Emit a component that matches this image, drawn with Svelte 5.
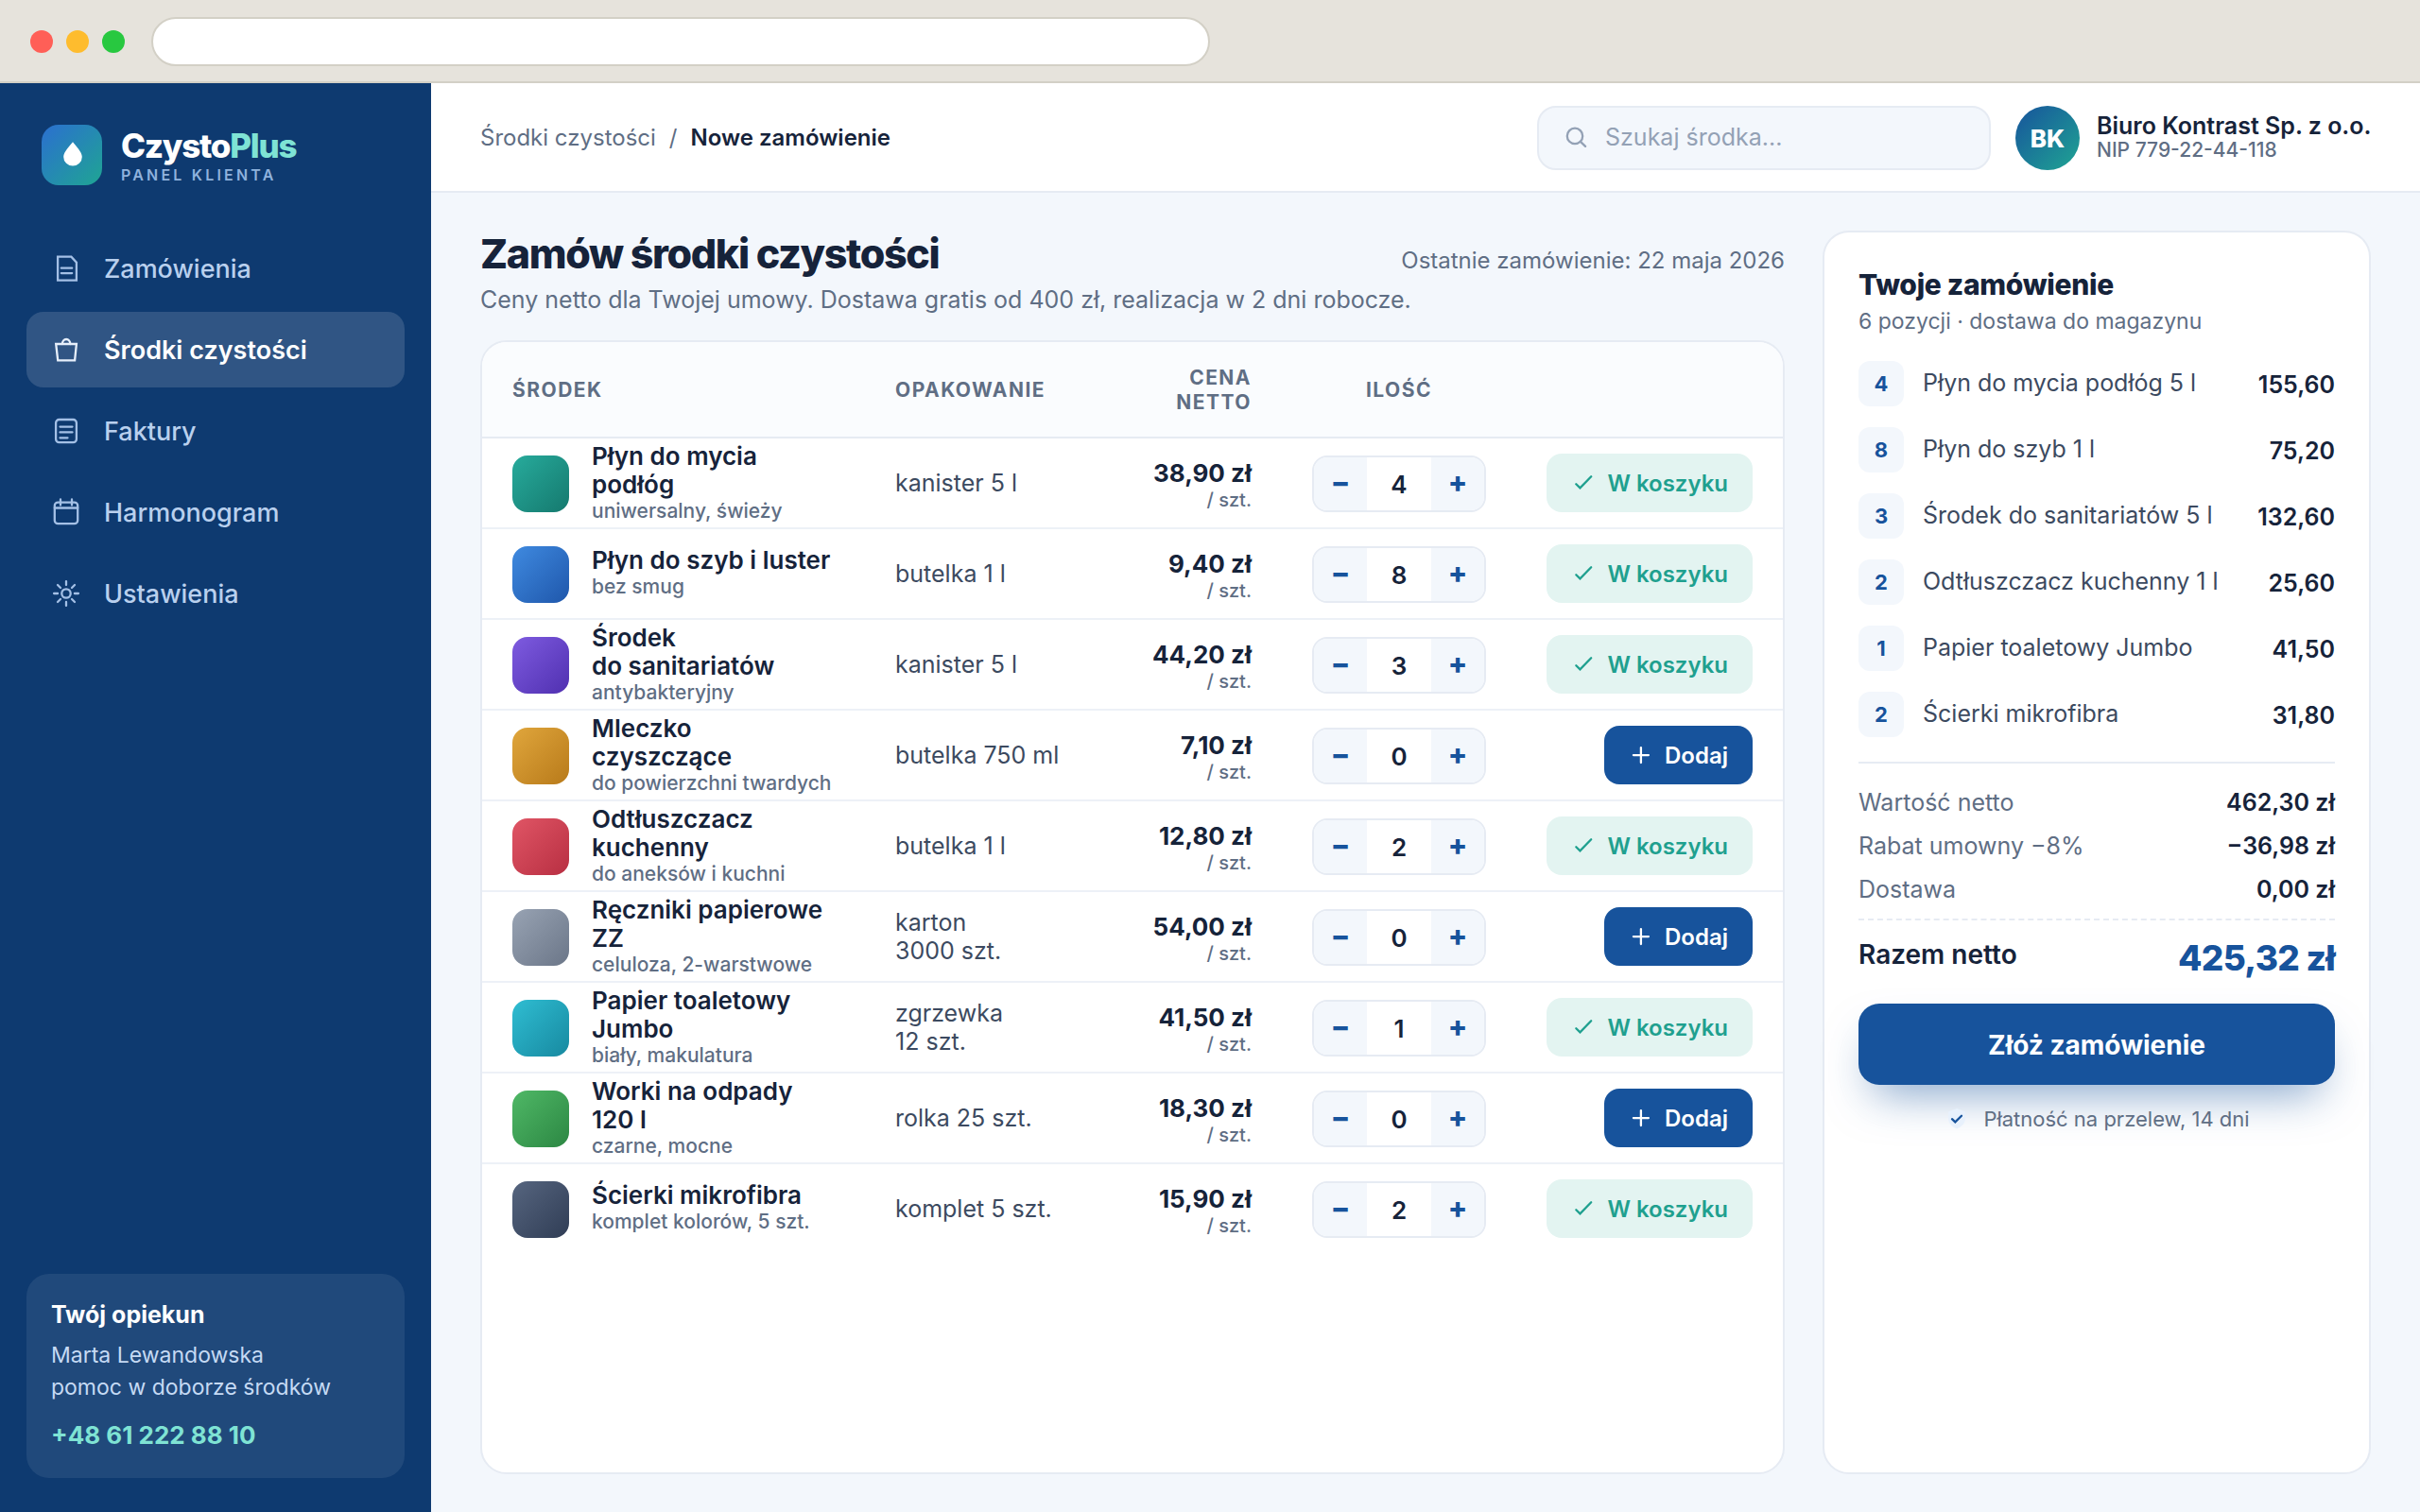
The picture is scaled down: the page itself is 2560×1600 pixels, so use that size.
<script lang="ts">
	type Product = {
		name: string;
		note: string;
		pack: string;
		price: string;
		qty: number;
		from: string;
		to: string;
	};

	const nav = [
		{ icon: 'doc', label: 'Zamówienia' },
		{ icon: 'bag', label: 'Środki czystości' },
		{ icon: 'invoice', label: 'Faktury' },
		{ icon: 'calendar', label: 'Harmonogram' },
		{ icon: 'sun', label: 'Ustawienia' }
	];

	let active = $state('bag');

	let products = $state<Product[]>([
		{ name: 'Płyn do mycia\npodłóg', note: 'uniwersalny, świeży', pack: 'kanister 5 l', price: '38,90', qty: 4, from: '#27ab9c', to: '#15796e' },
		{ name: 'Płyn do szyb i luster', note: 'bez smug', pack: 'butelka 1 l', price: '9,40', qty: 8, from: '#3f8ae0', to: '#1f57ab' },
		{ name: 'Środek\ndo sanitariatów', note: 'antybakteryjny', pack: 'kanister 5 l', price: '44,20', qty: 3, from: '#7e5be0', to: '#5030b0' },
		{ name: 'Mleczko\nczyszczące', note: 'do powierzchni twardych', pack: 'butelka 750 ml', price: '7,10', qty: 0, from: '#e0a63c', to: '#b87a1a' },
		{ name: 'Odtłuszczacz\nkuchenny', note: 'do aneksów i kuchni', pack: 'butelka 1 l', price: '12,80', qty: 2, from: '#e05565', to: '#b82f42' },
		{ name: 'Ręczniki papierowe\nZZ', note: 'celuloza, 2-warstwowe', pack: 'karton\n3000 szt.', price: '54,00', qty: 0, from: '#98a3b3', to: '#6b7688' },
		{ name: 'Papier toaletowy\nJumbo', note: 'biały, makulatura', pack: 'zgrzewka\n12 szt.', price: '41,50', qty: 1, from: '#2fbdd2', to: '#1789a0' },
		{ name: 'Worki na odpady\n120 l', note: 'czarne, mocne', pack: 'rolka 25 szt.', price: '18,30', qty: 0, from: '#4fb866', to: '#2c8743' },
		{ name: 'Ścierki mikrofibra', note: 'komplet kolorów, 5 szt.', pack: 'komplet 5 szt.', price: '15,90', qty: 2, from: '#56657f', to: '#303d55' }
	]);

	const lines = [
		{ qty: 4, name: 'Płyn do mycia podłóg 5 l', sum: '155,60' },
		{ qty: 8, name: 'Płyn do szyb 1 l', sum: '75,20' },
		{ qty: 3, name: 'Środek do sanitariatów 5 l', sum: '132,60' },
		{ qty: 2, name: 'Odtłuszczacz kuchenny 1 l', sum: '25,60' },
		{ qty: 1, name: 'Papier toaletowy Jumbo', sum: '41,50' },
		{ qty: 2, name: 'Ścierki mikrofibra', sum: '31,80' }
	];

	const totals = [
		{ label: 'Wartość netto', value: '462,30 zł' },
		{ label: 'Rabat umowny −8%', value: '−36,98 zł' },
		{ label: 'Dostawa', value: '0,00 zł' }
	];

	function change(product: Product, step: number) {
		product.qty = Math.max(0, product.qty + step);
	}
</script>

<div class="window">
	<div class="chrome">
		<span class="light red"></span>
		<span class="light yellow"></span>
		<span class="light green"></span>
		<div class="address"></div>
	</div>

	<div class="app">
		<aside class="sidebar">
			<div class="brand">
				<div class="brand-mark">
					<svg viewBox="0 0 64 64">
						<path d="M33 18.2c2.8 4 9.8 10.2 9.8 15.8a9.8 9.6 0 0 1-19.6 0c0-5.6 7-11.8 9.8-15.8z" />
					</svg>
				</div>
				<div class="brand-text">
					<div class="brand-name">Czysto<span>Plus</span></div>
					<div class="brand-sub">PANEL KLIENTA</div>
				</div>
			</div>

			<nav>
				{#each nav as item (item.icon)}
					<button class="nav-item" class:active={active === item.icon} onclick={() => (active = item.icon)}>
						<svg viewBox="0 0 36 36">
							{#if item.icon === 'doc'}
								<path d="M9.1 5.6h14.3l5.5 6v19H9.1z" />
								<path d="M12.8 17.7h11.4M12.8 23.1h11.4" />
							{:else if item.icon === 'bag'}
								<path d="M7.2 12h21.7l-1.8 17.3H9.2z" />
								<path d="M13.9 12a4.2 5 0 0 1 8.4 0" />
							{:else if item.icon === 'invoice'}
								<rect x="7.1" y="6" width="21.8" height="24.2" rx="3.5" />
								<path d="M11.5 13.6h13M11.5 19.4h13M11.5 25.3h8" />
							{:else if item.icon === 'calendar'}
								<rect x="5.8" y="7.6" width="24.4" height="22.6" rx="3.5" />
								<path d="M5.8 13.5h24.4M12 4.4v6.2M24 4.4v6.2" />
							{:else}
								<circle cx="18" cy="18" r="4.7" />
								<path d="M18 5.1v4M18 26.9v4M5.1 18h4M26.9 18h4M9 9l3 3M24 24l3 3M9 27l3-3M24 12l3-3" />
							{/if}
						</svg>
						{item.label}
					</button>
				{/each}
			</nav>

			<div class="advisor">
				<div class="advisor-title">Twój opiekun</div>
				<p>Marta Lewandowska<br />pomoc w doborze środków</p>
				<div class="advisor-phone">+48 61 222 88 10</div>
			</div>
		</aside>

		<main>
			<header class="topbar">
				<div class="crumbs">Środki czystości<i>/</i><b>Nowe zamówienie</b></div>
				<div class="search">
					<svg viewBox="0 0 30 30">
						<circle cx="14" cy="12.9" r="8.2" />
						<path d="M19.9 18.9l5.2 5" />
					</svg>
					<span>Szukaj środka...</span>
				</div>
				<div class="avatar">BK</div>
				<div class="client">
					<div class="client-name">Biuro Kontrast Sp. z o.o.</div>
					<div class="client-nip">NIP 779-22-44-118</div>
				</div>
			</header>

			<div class="content">
				<section class="catalog">
					<div class="heading">
						<h1>Zamów środki czystości</h1>
						<span>Ostatnie zamówienie: 22 maja 2026</span>
					</div>
					<p class="lead">Ceny netto dla Twojej umowy. Dostawa gratis od 400 zł, realizacja w 2 dni robocze.</p>

					<div class="card table">
						<div class="row head">
							<div>ŚRODEK</div>
							<div>OPAKOWANIE</div>
							<div class="right">CENA<br />NETTO</div>
							<div class="center">ILOŚĆ</div>
							<div></div>
						</div>
						{#each products as product (product.name)}
							<div class="row">
								<div class="product">
									<span class="swatch" style="background: linear-gradient(135deg, {product.from}, {product.to})"></span>
									<div class="product-text" class:short={!product.name.includes('\n')}>
										<div class="product-name">{product.name}</div>
										<div class="product-note">{product.note}</div>
									</div>
								</div>
								<div class="pack">{product.pack}</div>
								<div class="price">
									<b>{product.price} zł</b>
									<span>/ szt.</span>
								</div>
								<div class="qty">
									<div class="stepper">
										<button onclick={() => change(product, -1)}>−</button>
										<span>{product.qty}</span>
										<button onclick={() => change(product, 1)}>+</button>
									</div>
								</div>
								<div class="action">
									{#if product.qty > 0}
										<button class="btn in-cart">
											<svg viewBox="0 0 26 26"><path d="M5.3 14.2l4.2 4.2L21.2 6.300" /></svg>
											W koszyku
										</button>
									{:else}
										<button class="btn add" onclick={() => change(product, 1)}>
											<svg viewBox="0 0 26 26"><path d="M12.9 5.1v16M4.9 13.1h16" /></svg>
											Dodaj
										</button>
									{/if}
								</div>
							</div>
						{/each}
					</div>
				</section>

				<section class="card order">
					<h2>Twoje zamówienie</h2>
					<p class="order-sub">6 pozycji · dostawa do magazynu</p>
					<ul class="lines">
						{#each lines as line (line.name)}
							<li>
								<span class="chip">{line.qty}</span>
								<span class="line-name">{line.name}</span>
								<b>{line.sum}</b>
							</li>
						{/each}
					</ul>
					<div class="totals">
						{#each totals as total (total.label)}
							<div class="total-row"><span>{total.label}</span><b>{total.value}</b></div>
						{/each}
					</div>
					<div class="grand">
						<span>Razem netto</span>
						<b>425,32 zł</b>
					</div>
					<button class="submit">Złóż zamówienie</button>
					<div class="terms">
						<svg viewBox="0 0 28 28">
							<path class="shield" d="M14 3l9 3.5v7c0 5-3.5 8.5-9 11-5.5-2.5-9-6-9-11v-7z" />
							<path class="tick" d="M9 14.2l3.3 3.2 6.7-6.6" />
						</svg>
						Płatność na przelew, 14 dni
					</div>
				</section>
			</div>
		</main>
	</div>
</div>

<style>
	:global(body) {
		margin: 0;
		font-family: Inter, 'Liberation Sans', sans-serif;
		color: #16233a;
	}

	button {
		font-family: inherit;
		border: none;
		padding: 0;
		cursor: pointer;
	}

	h1,
	h2,
	p,
	ul {
		margin: 0;
		padding: 0;
	}

	svg {
		flex: none;
		fill: none;
		stroke: currentColor;
		stroke-width: 2.3;
		stroke-linecap: round;
	}

	.window {
		width: 2560px;
		height: 1600px;
		display: flex;
		flex-direction: column;
		overflow: hidden;
	}

	.chrome {
		box-sizing: border-box;
		height: 88px;
		padding: 0 32px;
		display: flex;
		align-items: center;
		gap: 14px;
		background: #e6e3dc;
		border-bottom: 2px solid #d3d0c6;
	}

	.light {
		width: 24px;
		height: 24px;
		border-radius: 50%;
		margin-top: 2px;
	}

	.red {
		background: #ff5f57;
	}

	.yellow {
		background: #febc2e;
	}

	.green {
		background: #28c840;
	}

	.address {
		box-sizing: border-box;
		width: 1120px;
		height: 52px;
		margin: 2px 0 0 14px;
		border: 2px solid #d3d0c6;
		border-radius: 26px;
		background: #fff;
	}

	.app {
		flex: 1;
		min-height: 0;
		display: flex;
	}

	/* Sidebar */
	.sidebar {
		box-sizing: border-box;
		width: 456px;
		padding: 44px 28px 36px;
		display: flex;
		flex-direction: column;
		background: #0e3a70;
	}

	.brand {
		display: flex;
		align-items: center;
		gap: 20px;
		height: 64px;
		padding-left: 16px;
		margin-bottom: 48px;
	}

	.brand-mark {
		width: 64px;
		height: 64px;
		border-radius: 18px;
		background: linear-gradient(135deg, #2b6fd0, #1fa593);
	}

	.brand-mark svg {
		display: block;
		fill: #fff;
		stroke: none;
	}

	.brand-text {
		padding-top: 3px;
	}

	.brand-name {
		font-size: 35px;
		line-height: 36px;
		font-weight: 800;
		letter-spacing: -0.036em;
		color: #fff;
	}

	.brand-name span {
		color: #7fe3d4;
	}

	.brand-sub {
		margin-top: 2px;
		font-size: 16px;
		line-height: 22px;
		font-weight: 600;
		letter-spacing: 3.2px;
		color: #8fb2dd;
	}

	nav {
		display: flex;
		flex-direction: column;
		gap: 6px;
	}

	.nav-item {
		display: flex;
		align-items: center;
		gap: 22px;
		height: 80px;
		padding: 0 24px;
		border-radius: 18px;
		background: none;
		color: #b9d0ee;
		font-size: 27px;
		font-weight: 500;
		text-align: left;
	}

	.nav-item svg {
		width: 36px;
		height: 36px;
		color: #a4c0e6;
	}

	.nav-item.active {
		background: rgba(255, 255, 255, 0.14);
		color: #fff;
		font-weight: 600;
	}

	.nav-item.active svg {
		color: #e6effb;
	}

	.advisor {
		box-sizing: border-box;
		height: 216px;
		margin-top: auto;
		padding: 26px;
		border-radius: 24px;
		background: rgba(255, 255, 255, 0.08);
	}

	.advisor-title {
		font-size: 25px;
		line-height: 34px;
		font-weight: 700;
		color: #fff;
	}

	.advisor p {
		margin-top: 9px;
		font-size: 23px;
		line-height: 34px;
		color: #c5daf4;
	}

	.advisor-phone {
		margin-top: 17px;
		font-size: 26px;
		line-height: 34px;
		font-weight: 700;
		color: #7fe3d4;
	}

	/* Top bar */
	main {
		flex: 1;
		min-width: 0;
		display: flex;
		flex-direction: column;
		background: #f3f7fc;
	}

	.topbar {
		box-sizing: border-box;
		height: 116px;
		padding: 2px 52px 0;
		display: flex;
		align-items: center;
		background: #fff;
		border-bottom: 2px solid #e6ebf3;
	}

	.crumbs {
		flex: 1;
		padding-bottom: 2px;
		font-size: 24px;
		color: #5f6e84;
	}

	.crumbs i {
		font-style: normal;
		margin: 0 14px;
	}

	.crumbs b {
		font-weight: 600;
		color: #16233a;
	}

	.search {
		box-sizing: border-box;
		width: 480px;
		height: 68px;
		margin-right: 26px;
		padding: 0 24px;
		display: flex;
		align-items: center;
		gap: 16px;
		border: 2px solid #e6ebf3;
		border-radius: 20px;
		background: #f3f7fc;
		color: #93a1b5;
		font-size: 25px;
	}

	.search span {
		padding-bottom: 2px;
	}

	.search svg {
		width: 30px;
		height: 30px;
	}

	.avatar {
		width: 68px;
		height: 68px;
		margin-right: 18px;
		border-radius: 50%;
		display: flex;
		align-items: center;
		justify-content: center;
		background: linear-gradient(135deg, #17539c, #1fa593);
		color: #fff;
		font-size: 26px;
		font-weight: 800;
	}

	.client {
		width: 290px;
		padding-bottom: 3px;
		white-space: nowrap;
	}

	.client-name {
		font-size: 25px;
		line-height: 28px;
		font-weight: 600;
	}

	.client-nip {
		font-size: 21px;
		line-height: 24px;
		font-weight: 500;
		color: #5f6e84;
	}

	/* Catalog */
	.content {
		flex: 1;
		min-height: 0;
		display: flex;
		gap: 40px;
		padding: 40px 52px;
	}

	.catalog {
		flex: 1;
		min-width: 0;
		display: flex;
		flex-direction: column;
	}

	.heading {
		display: flex;
		justify-content: space-between;
		align-items: baseline;
		height: 56px;
	}

	h1 {
		font-size: 43px;
		line-height: 48px;
		font-weight: 800;
		letter-spacing: -0.032em;
	}

	.heading span {
		font-size: 24px;
		color: #5f6e84;
	}

	.lead {
		height: 60px;
		font-size: 25px;
		line-height: 34px;
		color: #5f6e84;
	}

	.card {
		box-sizing: border-box;
		border: 2px solid #e6ebf3;
		border-radius: 28px;
		background: #fff;
	}

	.table {
		flex: 1;
		overflow: hidden;
	}

	.row {
		box-sizing: border-box;
		height: 96px;
		padding: 0 32px;
		display: grid;
		grid-template-columns: 405px 241px 136px 312px 1fr;
		align-items: center;
		border-bottom: 2px solid #edf1f7;
	}

	.row:last-child {
		border-bottom-color: transparent;
	}

	.row.head {
		height: 102px;
		padding-top: 2px;
		background: #fafcfe;
		border-bottom-color: #e6ebf3;
		font-size: 21px;
		line-height: 26px;
		font-weight: 700;
		letter-spacing: 0.07em;
		color: #5f6e84;
	}

	.right {
		text-align: right;
	}

	.center {
		text-align: center;
	}

	.product {
		display: flex;
		align-items: center;
		gap: 24px;
		height: 94px;
	}

	.swatch {
		width: 60px;
		height: 60px;
		margin-top: 2px;
		border-radius: 16px;
	}

	.product-text.short {
		margin-bottom: 2px;
	}

	.product-name {
		font-size: 26px;
		line-height: 30px;
		font-weight: 600;
		white-space: pre-line;
	}

	.product-note {
		font-size: 21px;
		line-height: 26px;
		font-weight: 500;
		color: #5f6e84;
	}

	.pack {
		font-size: 25px;
		line-height: 30px;
		white-space: pre-line;
		color: #3c4a60;
	}

	.price {
		display: flex;
		flex-direction: column;
		align-items: flex-end;
		margin-top: 6px;
	}

	.price b {
		font-size: 26px;
		line-height: 30px;
		font-weight: 700;
	}

	.price span {
		font-size: 20px;
		line-height: 26px;
		font-weight: 500;
		color: #5f6e84;
	}

	.qty {
		display: flex;
		justify-content: center;
		margin-top: 2px;
	}

	.stepper {
		display: flex;
		height: 56px;
		border: 2px solid #e6ebf3;
		border-radius: 16px;
		overflow: hidden;
	}

	.stepper button {
		width: 56px;
		padding-bottom: 4px;
		background: #f3f7fc;
		color: #17539c;
		font-size: 30px;
		font-weight: 800;
	}

	.stepper span {
		width: 68px;
		line-height: 57px;
		text-align: center;
		font-size: 26px;
		font-weight: 600;
	}

	.action {
		display: flex;
		justify-content: flex-end;
	}

	.btn {
		display: flex;
		align-items: center;
		gap: 12px;
		height: 62px;
		padding: 0 26px;
		border-radius: 16px;
		font-size: 24px;
		font-weight: 600;
		white-space: nowrap;
	}

	.btn svg {
		width: 26px;
		height: 26px;
	}

	.in-cart {
		background: #e3f4f1;
		color: #1fa08f;
	}

	.add {
		background: #17539c;
		color: #fff;
	}

	/* Order summary */
	.order {
		flex: none;
		width: 580px;
		padding: 36px;
		display: flex;
		flex-direction: column;
	}

	h2 {
		font-size: 30px;
		line-height: 38px;
		font-weight: 800;
		letter-spacing: -0.01em;
	}

	.order-sub {
		font-size: 23px;
		line-height: 40px;
		color: #5f6e84;
	}

	.lines {
		list-style: none;
		margin-top: 22px;
		padding-bottom: 26px;
		display: flex;
		flex-direction: column;
		gap: 22px;
		border-bottom: 2px solid #e6ebf3;
	}

	.lines li {
		display: flex;
		align-items: center;
		height: 48px;
		font-size: 25px;
	}

	.chip {
		width: 48px;
		line-height: 48px;
		margin-right: 20px;
		border-radius: 12px;
		text-align: center;
		background: #f3f7fc;
		color: #17539c;
		font-size: 22px;
		font-weight: 700;
	}

	.line-name {
		flex: 1;
		padding-bottom: 2px;
		color: #3c4a60;
	}

	.lines b {
		padding-top: 2px;
		font-weight: 600;
	}

	.totals {
		padding: 18px 0 8px;
		border-bottom: 2px dashed #e6ebf3;
	}

	.total-row {
		display: flex;
		justify-content: space-between;
		font-size: 25px;
		line-height: 46px;
		color: #5f6e84;
	}

	.total-row b {
		font-weight: 600;
		color: #16233a;
	}

	.grand {
		height: 88px;
		display: flex;
		justify-content: space-between;
		align-items: center;
		font-size: 28px;
		font-weight: 600;
	}

	.grand span {
		padding-bottom: 16px;
	}

	.grand b {
		padding-bottom: 10px;
		font-size: 37px;
		font-weight: 800;
		letter-spacing: -0.02em;
		color: #17539c;
	}

	.submit {
		height: 86px;
		padding-top: 2px;
		border-radius: 22px;
		background: #17539c;
		color: #fff;
		font-size: 28px;
		font-weight: 700;
		box-shadow: 0 24px 48px -16px rgba(23, 83, 156, 0.55);
	}

	.terms {
		margin-top: 20px;
		display: flex;
		align-items: center;
		justify-content: center;
		gap: 14px;
		font-size: 22px;
		line-height: 32px;
		color: #5f6e84;
	}

	.terms svg {
		width: 28px;
		height: 28px;
	}

	.shield {
		fill: #e8f1fc;
		stroke: none;
	}

	.tick {
		stroke: #17539c;
	}
</style>
